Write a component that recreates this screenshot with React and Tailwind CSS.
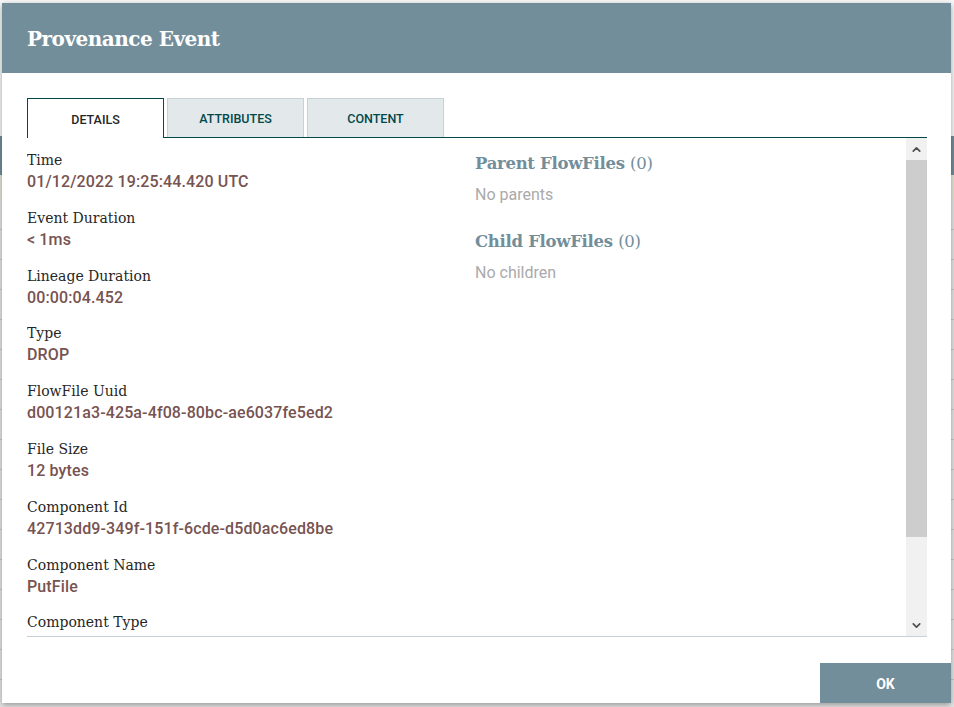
import { ChevronUp, ChevronDown } from 'lucide-react'

const details = [
  ['Time', '01/12/2022 19:25:44.420 UTC'],
  ['Event Duration', '< 1ms'],
  ['Lineage Duration', '00:00:04.452'],
  ['Type', 'DROP'],
  ['FlowFile Uuid', 'd00121a3-425a-4f08-80bc-ae6037fe5ed2'],
  ['File Size', '12 bytes'],
  ['Component Id', '42713dd9-349f-151f-6cde-d5d0ac6ed8be'],
  ['Component Name', 'PutFile'],
  ['Component Type', null],
]

const slab = "font-['DejaVu_Serif',serif]"
const roboto = "font-['Roboto',sans-serif]"

function Tab({ label, active }) {
  return (
    <div
      className={
        active
          ? 'w-[137px] h-[40px] pt-[3px] flex items-center justify-center bg-white border border-b-0 border-[#004849] text-[#262626] text-[12.5px] font-medium -mb-px z-10'
          : 'w-[137px] h-[39px] pt-[3px] flex items-center justify-center bg-[#e3e8eb] border border-b-0 border-[#c7d2d7] text-[#004849] text-[12.5px] font-medium'
      }
    >
      {label}
    </div>
  )
}

export default function App() {
  return (
    <div className={`relative w-[954px] h-[707px] overflow-hidden bg-[#f4f4f4] ${roboto}`}>
      {/* page behind the dialog */}
      <div className="flex flex-col">
        <div className="h-[136px] bg-[#f7f7f7]" />
        <div className="h-[39px] bg-[#728e9b]" />
        <div className="h-[25px] bg-[#e8e6d6]" />
        {Array.from({ length: 17 }).map((_, i) => (
          <div key={i} className="h-[30px] border-b border-[#c8c8c8] bg-[#e6e6e6]" />
        ))}
      </div>

      {/* dialog */}
      <div className="absolute left-[2px] top-[3px] w-[949px] h-[700px] bg-white flex flex-col shadow-[0_2px_6px_rgba(0,0,0,0.35)]">
        <div className="h-[70px] shrink-0 bg-[#728e9b] px-[25px] pt-[2px] flex items-center">
          <h1 className={`${slab} text-white text-[20px] font-bold tracking-[-0.5px]`}>Provenance Event</h1>
        </div>

        <div className="flex-1 flex flex-col pl-[25px] pr-[24px] pt-[25px]">
          <div className="flex items-end gap-[3px] border-b border-[#004849]">
            <Tab label="DETAILS" active />
            <Tab label="ATTRIBUTES" />
            <Tab label="CONTENT" />
          </div>

          <div className="h-[499px] flex border-b border-[#c7d2d7] overflow-hidden">
            <div className="w-[448px] pt-[12px]">
              {details.map(([label, value]) => (
                <div key={label} className="mb-[15.8px]">
                  <div className={`${slab} text-[14px] leading-5 text-[#262626]`}>{label}</div>
                  {value && (
                    <div className="mt-[2px] text-[16px] leading-5 font-medium tracking-[0.12px] text-[#775351]">{value}</div>
                  )}
                </div>
              ))}
            </div>

            <div className="flex-1 pt-[14px]">
              <div className={`${slab} text-[16.5px] leading-6 font-bold text-[#728e9b] tracking-[-0.3px]`}>
                Parent FlowFiles <span className="font-normal">(0)</span>
              </div>
              <div className="mt-[9px] text-[16px] leading-5 text-[#aaaaaa]">No parents</div>
              <div className={`${slab} mt-[25px] text-[16.5px] leading-6 font-bold text-[#728e9b] tracking-[-0.3px]`}>
                Child FlowFiles <span className="font-normal">(0)</span>
              </div>
              <div className="mt-[9px] text-[16px] leading-5 text-[#aaaaaa]">No children</div>
            </div>

            {/* scrollbar */}
            <div className="w-[21px] flex flex-col bg-[#f1f1f1]">
              <div className="h-[22px] flex items-center justify-center">
                <ChevronUp size={13} strokeWidth={3.2} color="#505050" />
              </div>
              <div className="h-[377px] bg-[#cdcdcd]" />
              <div className="flex-1" />
              <div className="h-[22px] flex items-center justify-center">
                <ChevronDown size={13} strokeWidth={3.2} color="#505050" />
              </div>
            </div>
          </div>

          <div className="flex-1 flex items-end justify-end -mr-[24px]">
            <button className="w-[131px] h-[40px] pt-[3px] bg-[#728e9b] text-white text-[14px] font-bold">OK</button>
          </div>
        </div>
      </div>
    </div>
  )
}
